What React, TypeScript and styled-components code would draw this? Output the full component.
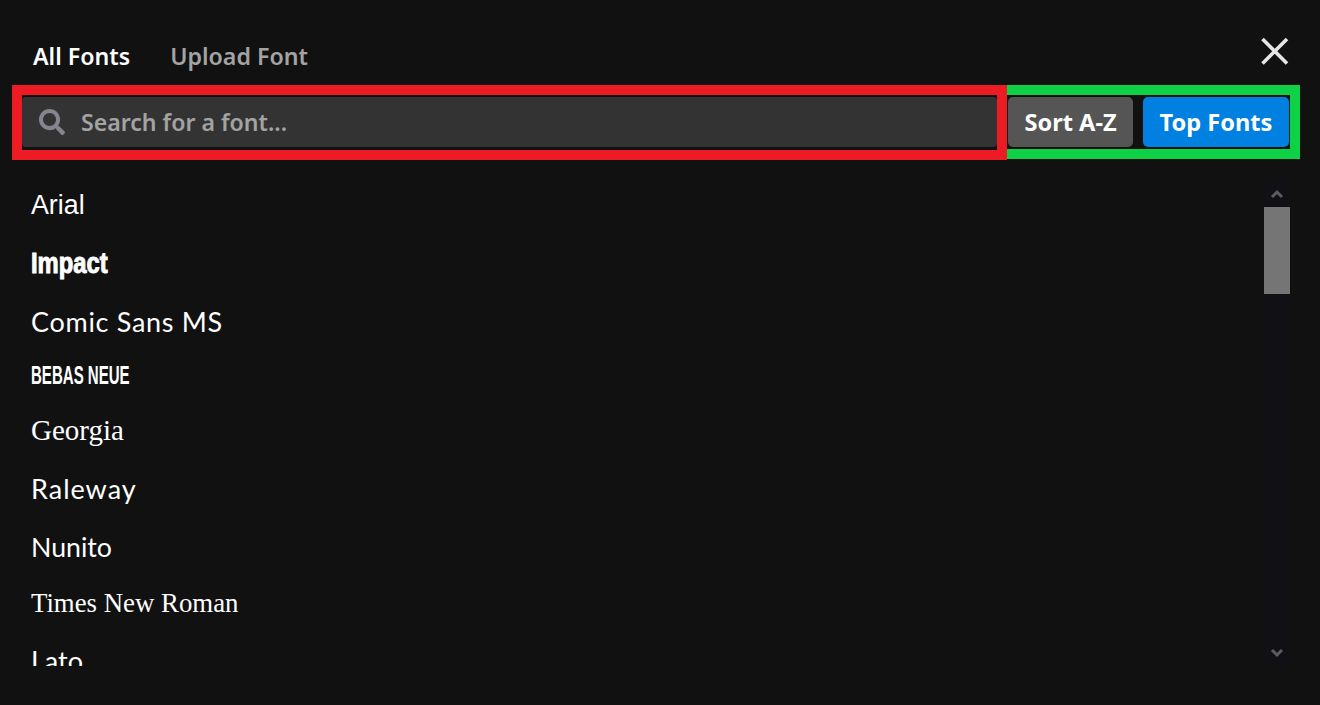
import { FaSearch } from "react-icons/fa";
import styled, { createGlobalStyle } from "styled-components";

const fonts = [
  { name: "Arial", family: '"Liberation Sans", sans-serif', size: 26.8, height: 58 },
  { name: "Impact", family: '"Liberation Sans", sans-serif', size: 29, height: 59, weight: 700, stroke: 1, squeeze: 0.82 },
  { name: "Comic Sans MS", family: '"Lato", sans-serif', size: 27, height: 56, spacing: 0.7 },
  { name: "BEBAS NEUE", family: '"Liberation Sans", sans-serif', size: 25.5, height: 53, weight: 700, squeeze: 0.59 },
  { name: "Georgia", family: '"Liberation Serif", serif', size: 29, height: 57 },
  { name: "Raleway", family: '"Lato", sans-serif', size: 27, height: 59, spacing: 1 },
  { name: "Nunito", family: '"Lato", sans-serif', size: 26.7, height: 57 },
  { name: "Times New Roman", family: '"Liberation Serif", serif', size: 26.8, height: 57 },
  { name: "Lato", family: '"Lato", sans-serif', size: 27, height: 56 },
];

export default function App() {
  return (
    <Screen>
      <GlobalStyle />
      <Header>
        <Tabs>
          <Tab $active>All Fonts</Tab>
          <Tab>Upload Font</Tab>
        </Tabs>
        <CloseBtn aria-label="Close">
          <svg width="30" height="30" viewBox="0 0 30 30">
            <path d="M2.5 3 L27 27.5 M27 3 L2.5 27.5" stroke="#e6e6e6" strokeWidth="3.6" fill="none" />
          </svg>
        </CloseBtn>
      </Header>

      <Toolbar>
        <SearchOutline>
          <SearchField>
            <FaSearch size={26} color="#85858f" />
            <SearchInput placeholder="Search for a font..." />
          </SearchField>
        </SearchOutline>
        <SortOutline>
          <SortBtn>Sort A-Z</SortBtn>
          <SortBtn $primary>Top Fonts</SortBtn>
        </SortOutline>
      </Toolbar>

      <Body>
        <FontList>
          {fonts.map((f) => (
            <FontRow key={f.name} $height={f.height}>
              <FontName
                $family={f.family}
                $size={f.size}
                $weight={f.weight ?? 400}
                $stroke={f.stroke ?? 0}
                $squeeze={f.squeeze ?? 1}
                $spacing={f.spacing ?? 0}
              >
                {f.name}
              </FontName>
            </FontRow>
          ))}
        </FontList>
        <ScrollRail>
          <ScrollArrow>
            <svg width="14" height="10" viewBox="0 0 14 10">
              <path d="M2 8 L7 3 L12 8" stroke="#5c5c60" strokeWidth="3" fill="none" />
            </svg>
          </ScrollArrow>
          <ScrollThumb />
          <ScrollSpace />
          <ScrollArrow>
            <svg width="14" height="10" viewBox="0 0 14 10">
              <path d="M2 2 L7 7 L12 2" stroke="#5c5c60" strokeWidth="3" fill="none" />
            </svg>
          </ScrollArrow>
        </ScrollRail>
      </Body>
    </Screen>
  );
}

const GlobalStyle = createGlobalStyle`
  html, body {
    margin: 0;
    padding: 0;
    background: #111111;
  }
  * {
    box-sizing: border-box;
  }
`;

const Screen = styled.div`
  width: 1320px;
  height: 705px;
  overflow: hidden;
  background: #111111;
  padding: 0 20px 0 12px;
  font-family: "Noto Sans", "Open Sans", sans-serif;
`;

const Header = styled.div`
  height: 85px;
  display: flex;
  align-items: flex-start;
  justify-content: space-between;
`;

const Tabs = styled.div`
  display: flex;
  gap: 40px;
  padding: 39px 0 0 21px;
`;

const Tab = styled.div<{ $active?: boolean }>`
  font-size: 23.2px;
  line-height: 34px;
  font-weight: 600;
  color: ${(p) => (p.$active ? "#ffffff" : "#a3a3a3")};
`;

const CloseBtn = styled.button`
  width: 30px;
  height: 30px;
  margin: 36px 10px 0 0;
  padding: 0;
  border: 0;
  background: transparent;
  display: flex;
`;

const Toolbar = styled.div`
  display: flex;
  align-items: flex-start;
`;

const SearchOutline = styled.div`
  width: 995px;
  height: 75px;
  border: 10px solid #ed1c24;
  padding-bottom: 3px;
  padding-top: 2px;
`;

const SearchField = styled.div`
  height: 50px;
  background: #333333;
  border-radius: 4px;
  padding: 0 16px 0 17px;
  display: flex;
  align-items: center;
  gap: 14px;
`;

const SearchInput = styled.input`
  flex: 1;
  min-width: 0;
  border: 0;
  outline: 0;
  background: transparent;
  font: 600 23.1px "Noto Sans", "Open Sans", sans-serif;
  color: #ffffff;

  &::placeholder {
    color: #a3a3a3;
    opacity: 1;
  }
`;

const SortOutline = styled.div`
  width: 293px;
  height: 74px;
  border: 10px solid #0fd145;
  border-left: 0;
  padding: 2px 1px 2px 1px;
  display: flex;
  gap: 10px;
`;

const SortBtn = styled.button<{ $primary?: boolean }>`
  height: 50px;
  width: ${(p) => (p.$primary ? "146px" : "125px")};
  padding: 0;
  border: 0;
  border-radius: 5px;
  background: ${(p) => (p.$primary ? "#0080e0" : "#555555")};
  color: #ffffff;
  font: 700 23.6px "Noto Sans", "Open Sans", sans-serif;
`;

const Body = styled.div`
  height: 507px;
  padding-top: 16px;
  display: flex;
`;

const FontList = styled.div`
  flex: 1;
  height: 490px;
  overflow: hidden;
  padding-left: 19px;
`;

const FontRow = styled.div<{ $height: number }>`
  height: ${(p) => p.$height}px;
  display: flex;
  align-items: center;
`;

const FontName = styled.span<{
  $family: string;
  $size: number;
  $weight: number;
  $stroke: number;
  $squeeze: number;
  $spacing: number;
}>`
  display: inline-block;
  color: #ffffff;
  font-family: ${(p) => p.$family};
  font-size: ${(p) => p.$size}px;
  font-weight: ${(p) => p.$weight};
  letter-spacing: ${(p) => p.$spacing}px;
  -webkit-text-stroke: ${(p) => p.$stroke}px #ffffff;
  transform: scaleX(${(p) => p.$squeeze});
  transform-origin: left center;
`;

const ScrollRail = styled.div`
  width: 26px;
  height: 486px;
  margin: 4px 10px 0 0;
  background: #111115;
  display: flex;
  flex-direction: column;
`;

const ScrollArrow = styled.div`
  height: 27px;
  display: flex;
  align-items: center;
  justify-content: center;
`;

const ScrollThumb = styled.div`
  height: 87px;
  background: #757575;
`;

const ScrollSpace = styled.div`
  flex: 1;
`;
